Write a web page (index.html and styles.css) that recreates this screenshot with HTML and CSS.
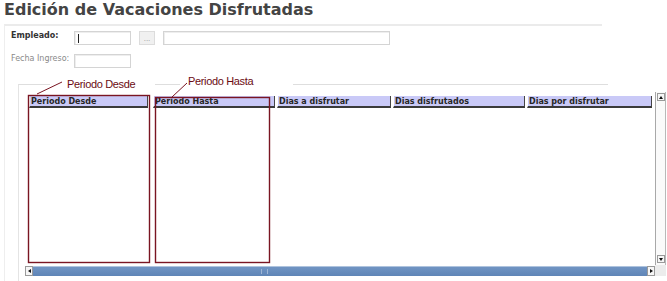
FILE: index.html
```html
<!DOCTYPE html>
<html lang="es">
  <head>
    <meta charset="UTF-8" />
    <meta name="viewport" content="width=device-width, initial-scale=1.0" />
    <title>Edición de Vacaciones Disfrutadas</title>
    <link rel="stylesheet" href="styles.css">
  </head>
  <body>
    <div class="page">
      <h1 class="title">Edición de Vacaciones Disfrutadas</h1>
      <div class="panel">
        <div class="row">
          <span class="label strong">Empleado:</span>
          <div class="field short"><span class="caret"></span></div>
          <div class="dots">...</div>
          <div class="field long"></div>
        </div>
        <div class="row">
          <span class="label">Fecha Ingreso:</span>
          <div class="field short"></div>
        </div>
        <div class="group">
          <div class="grid">
            <div class="view">
              <div class="head">
                <div class="col c1">Periodo Desde</div>
                <div class="col c2">Periodo Hasta</div>
                <div class="col c3">Dias a disfrutar</div>
                <div class="col c4">Dias disfrutados</div>
                <div class="col c5">Dias por disfrutar</div>
              </div>
            </div>
            <div class="vscroll">
              <div class="arrow"><span class="tri up"></span></div>
              <div class="arrow down"><span class="tri dn"></span></div>
            </div>
            <div class="hscroll">
              <div class="arrow"><span class="tri lt"></span></div>
              <div class="bar"><span class="grip"></span></div>
              <div class="arrow"><span class="tri rt"></span></div>
            </div>
            <div class="corner"></div>
          </div>
        </div>
      </div>

      <!-- notas sobre la captura -->
      <span class="note note-desde">Periodo Desde</span>
      <span class="note note-hasta">Periodo Hasta</span>
      <svg class="marks" width="667" height="281" viewBox="0 0 667 281">
        <rect x="28.5" y="95.5" width="121" height="167" fill="none" stroke="#7a1522" stroke-width="1.4" />
        <rect x="155.5" y="97.5" width="114" height="165" fill="none" stroke="#7a1522" stroke-width="1.4" />
        <line x1="37" y1="94" x2="62" y2="82" stroke="#7a1522" stroke-width="1" />
        <line x1="172" y1="97" x2="187" y2="83" stroke="#7a1522" stroke-width="1" />
      </svg>
    </div>
  </body>
</html>
```

FILE: styles.css
```css
body {
  margin: 0;
  background-color: #fff;
  font-family: "DejaVu Sans", Verdana, sans-serif;
  overflow: hidden;
}
.page {
  position: relative;
  width: 667px;
  height: 281px;
}
.title {
  margin: 0;
  padding-left: 4px;
  height: 24px;
  font-size: 16px;
  line-height: 20px;
  color: #444;
}
.panel {
  margin-left: 4px;
  width: 597px;
  height: 250px;
  padding-top: 5px;
  border-top: 2px solid #ebebeb;
  border-left: 1px solid #eeeeee;
}
.row {
  display: flex;
  align-items: flex-start;
  height: 14px;
  padding-left: 6px;
}
.row + .row {
  margin-top: 9px;
}
.label {
  width: 63px;
  font-size: 8px;
  line-height: 10px;
  color: #8a8a8a;
  white-space: nowrap;
}
.label.strong {
  font-weight: bold;
  color: #333;
}
.field {
  box-sizing: border-box;
  display: flex;
  align-items: center;
  height: 14px;
  padding-left: 3px;
  border: 1px solid #d4d4d4;
  box-shadow: inset 1px 1px 0 #eeeeee;
  background-color: #fff;
}
.field.short {
  width: 57px;
}
.field.long {
  width: 227px;
  margin-left: 8px;
}
.caret {
  width: 1px;
  height: 9px;
  background-color: #222;
}
.dots {
  box-sizing: border-box;
  width: 16px;
  height: 14px;
  margin-left: 8px;
  border: 1px solid #dcdcdc;
  background-color: #f0f0f0;
  color: #999;
  font-size: 7px;
  line-height: 14px;
  text-align: center;
}
.group {
  width: 583px;
  height: 189px;
  margin: 16px 0 0 13px;
  padding: 7px 0 0 6px;
  border-top: 1px solid #dedede;
  border-left: 1px solid #e4e4e4;
}
.grid {
  display: grid;
  grid-template-columns: 630px 11px;
  grid-template-rows: 173px 11px;
  width: 641px;
}
.view {
  padding: 4px 0 0 4px;
  background-color: #fff;
}
.head {
  display: flex;
}
.col {
  box-sizing: border-box;
  height: 12px;
  margin-right: 2px;
  padding: 1px 0 0 1px;
  background-color: #c9c9f7;
  border-left: 1px solid #fff;
  border-right: 1px solid #444;
  border-bottom: 2px solid #3a3a3a;
  font-size: 8px;
  font-weight: bold;
  line-height: 9px;
  color: #262626;
  white-space: nowrap;
  overflow: hidden;
}
.c1 { width: 119px; margin-right: 5px; }
.c2 { width: 122px; }
.c3 { width: 114px; }
.c4 { width: 132px; }
.c5 { width: 125px; }
.vscroll {
  display: flex;
  flex-direction: column;
  justify-content: space-between;
  align-items: center;
  padding: 1px 0 2px;
  border-left: 1px solid #a8a8a8;
  border-right: 1px solid #b8b8b8;
  background-color: #fafafa;
}
.arrow {
  box-sizing: border-box;
  display: flex;
  align-items: center;
  justify-content: center;
  width: 8px;
  height: 8px;
  border: 1px solid #9a9a9a;
  background-color: #f6f6f6;
}
.hscroll {
  display: flex;
  margin-top: 1px;
}
.hscroll .arrow {
  height: 10px;
}
.bar {
  flex: 1;
  display: flex;
  align-items: center;
  padding-left: 228px;
  background: linear-gradient(#aec3de 0 1px, #7094c3 1px, #5f85b7);
}
.grip {
  width: 5px;
  height: 5px;
  border-left: 1px solid #9fb6d6;
  border-right: 1px solid #9fb6d6;
}
.corner {
  background-color: #ececec;
}
.tri {
  width: 0;
  height: 0;
  border: 2px solid transparent;
}
.tri.up { border-bottom: 3px solid #111; border-top-width: 0; }
.tri.dn { border-top: 3px solid #111; border-bottom-width: 0; }
.tri.lt { border-right: 3px solid #111; border-left-width: 0; }
.tri.rt { border-left: 3px solid #111; border-right-width: 0; }
.note {
  position: absolute;
  height: 14px;
  background-color: #fff;
  font-family: "Liberation Sans", Arial, sans-serif;
  font-size: 11px;
  line-height: 12px;
  letter-spacing: -0.35px;
  color: #6b0b12;
  white-space: nowrap;
}
.note-desde {
  left: 50px;
  top: 78px;
  width: 88px;
  padding-left: 17px;
}
.note-hasta {
  left: 180px;
  top: 75px;
  width: 105px;
  padding-left: 8px;
}
.marks {
  position: absolute;
  left: 0;
  top: 0;
  pointer-events: none;
}
```
